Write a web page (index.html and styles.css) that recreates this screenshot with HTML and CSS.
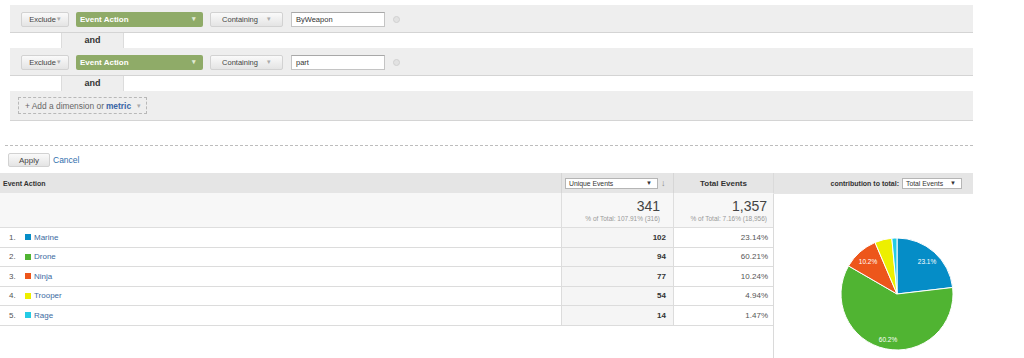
FILE: index.html
```html
<!DOCTYPE html>
<html lang="en">
<head>
    <meta charset="UTF-8">
    <title>Event Actions</title>
    <link rel="stylesheet" href="styles.css">
</head>
<body>

    <!-- Advanced filter -->
    <div class="filters">
        <div class="filter-row">
            <span class="btn btn-type">Exclude<i class="caret">▾</i></span>
            <span class="dim-select">Event Action<i class="caret">▾</i></span>
            <span class="btn btn-match">Containing<i class="caret">▾</i></span>
            <span class="text-input">ByWeapon</span>
            <span class="remove"></span>
        </div>
        <div class="and-row">
            <span class="and-box"></span>
            <span class="and-label">and</span>
            <span class="and-box wide"></span>
        </div>
        <div class="filter-row">
            <span class="btn btn-type">Exclude<i class="caret">▾</i></span>
            <span class="dim-select">Event Action<i class="caret">▾</i></span>
            <span class="btn btn-match">Containing<i class="caret">▾</i></span>
            <span class="text-input">part</span>
            <span class="remove"></span>
        </div>
        <div class="and-row">
            <span class="and-box"></span>
            <span class="and-label">and</span>
            <span class="and-box wide"></span>
        </div>
        <div class="add-row">
            <span class="add-btn">+ Add a dimension or <b>metric</b><i class="caret">▾</i></span>
        </div>
    </div>

    <div class="divider"></div>

    <div class="actions">
        <span class="btn apply">Apply</span>
        <a href="#" class="cancel">Cancel</a>
    </div>

    <!-- Report table -->
    <div class="report">
        <div class="grid">
            <div class="row head">
                <div class="cell name">Event Action</div>
                <div class="cell unique">
                    <span class="metric-select">Unique Events<i>▼</i></span>
                    <span class="sort">&#8595;</span>
                </div>
                <div class="cell total">Total Events</div>
            </div>
            <div class="row totals">
                <div class="cell name"></div>
                <div class="cell unique">
                    <span class="big">341</span>
                    <span class="pct">% of Total: 107.91% (316)</span>
                </div>
                <div class="cell total">
                    <span class="big">1,357</span>
                    <span class="pct">% of Total: 7.16% (18,956)</span>
                </div>
            </div>
            <div class="row item">
                <div class="cell name"><span class="idx">1.</span><span class="swatch blue"></span><a href="#">Marine</a></div>
                <div class="cell unique">102</div>
                <div class="cell total">23.14%</div>
            </div>
            <div class="row item">
                <div class="cell name"><span class="idx">2.</span><span class="swatch green"></span><a href="#">Drone</a></div>
                <div class="cell unique">94</div>
                <div class="cell total">60.21%</div>
            </div>
            <div class="row item">
                <div class="cell name"><span class="idx">3.</span><span class="swatch orange"></span><a href="#">Ninja</a></div>
                <div class="cell unique">77</div>
                <div class="cell total">10.24%</div>
            </div>
            <div class="row item">
                <div class="cell name"><span class="idx">4.</span><span class="swatch yellow"></span><a href="#">Trooper</a></div>
                <div class="cell unique">54</div>
                <div class="cell total">4.94%</div>
            </div>
            <div class="row item">
                <div class="cell name"><span class="idx">5.</span><span class="swatch cyan"></span><a href="#">Rage</a></div>
                <div class="cell unique">14</div>
                <div class="cell total">1.47%</div>
            </div>
        </div>

        <div class="chart">
            <div class="chart-head">
                contribution to total:
                <span class="metric-select small">Total Events<i>▼</i></span>
            </div>
            <div class="chart-body">
                <svg width="200" height="165" viewBox="0 0 200 165">
                    <g stroke="#fff" stroke-width="1">
                        <path fill="#058dc7" d="M124,100 L124,44 A56,56 0 0 1 179.62,93.47 Z"/>
                        <path fill="#50b432" d="M124,100 L179.62,93.47 A56,56 0 1 1 75.53,71.95 Z"/>
                        <path fill="#ed561b" d="M124,100 L75.53,71.95 A56,56 0 0 1 102.05,48.48 Z"/>
                        <path fill="#edef00" d="M124,100 L102.05,48.48 A56,56 0 0 1 118.84,44.24 Z"/>
                        <path fill="#24cbe5" d="M124,100 L118.84,44.24 A56,56 0 0 1 124,44 Z"/>
                    </g>
                    <g class="pie-label" fill="#fff" text-anchor="middle">
                        <text x="154" y="70">23.1%</text>
                        <text x="95" y="70">10.2%</text>
                        <text x="115" y="148">60.2%</text>
                    </g>
                </svg>
            </div>
        </div>
    </div>

</body>
</html>
```

FILE: styles.css
```css
body {
    margin: 0;
    font-family: "Liberation Sans", Arial, sans-serif;
    color: #333;
    background: #fff;
}
i {
    font-style: normal;
}

/* filter panel */
.filters {
    width: 963px;
    margin: 5px 0 0 10px;
}
.filter-row {
    display: flex;
    align-items: center;
    box-sizing: border-box;
    height: 28px;
    padding: 1px 0 0 11px;
    background: #eeeeee;
    border-bottom: 1px solid #d4d4d4;
}
.btn {
    display: inline-flex;
    align-items: center;
    justify-content: center;
    box-sizing: border-box;
    height: 15px;
    border: 1px solid #d2d2d2;
    border-radius: 2px;
    background: linear-gradient(#fafafa, #e4e4e4);
    font-size: 7.5px;
    color: #444;
}
.caret {
    color: #aaa;
    font-size: 7px;
}
.btn-type {
    width: 48px;
}
.btn-type .caret {
    margin-left: 1px;
}
.btn-match {
    width: 73px;
    margin-left: 7px;
}
.btn-match .caret {
    margin-left: 9px;
}
.dim-select {
    display: inline-flex;
    align-items: center;
    justify-content: space-between;
    box-sizing: border-box;
    width: 127px;
    height: 15px;
    margin-left: 7px;
    padding: 0 7px 0 4px;
    border-radius: 2px;
    background: #8fab68;
    color: #fff;
    font-size: 8px;
    font-weight: bold;
}
.dim-select .caret {
    color: #e3ecd6;
}
.text-input {
    display: inline-flex;
    align-items: center;
    box-sizing: border-box;
    width: 94px;
    height: 15px;
    margin-left: 8px;
    padding-left: 4px;
    border: 1px solid #c4c4c4;
    border-top-color: #a8a8a8;
    background: #fff;
    font-size: 7.5px;
    color: #333;
}
.remove {
    width: 5px;
    height: 5px;
    margin-left: 8px;
    border: 1px solid #d0d0d0;
    border-radius: 50%;
    background: #e2e2e2;
}
.and-row {
    display: flex;
    height: 15px;
    background: #eeeeee;
}
.and-box {
    width: 52px;
    background: #fff;
    border-right: 1px solid #dcdcdc;
    box-sizing: border-box;
}
.and-box.wide {
    flex: 1;
    border-left: 1px solid #dcdcdc;
    border-right: none;
}
.and-label {
    width: 61px;
    text-align: center;
    font-size: 9px;
    font-weight: bold;
    line-height: 15px;
    color: #333;
}
.add-row {
    display: flex;
    align-items: center;
    box-sizing: border-box;
    height: 30px;
    padding-left: 8px;
    background: #eeeeee;
    border-bottom: 1px solid #d4d4d4;
}
.add-btn {
    display: inline-flex;
    align-items: center;
    box-sizing: border-box;
    height: 17px;
    padding: 0 5px 0 6px;
    border: 1px dashed #b8b8b8;
    font-size: 8.4px;
    color: #666;
}
.add-btn b {
    color: #3a66a6;
    margin-left: 2px;
}
.add-btn .caret {
    margin-left: 6px;
}

.divider {
    width: 968px;
    margin: 24px 0 0 5px;
    border-top: 1px dashed #bdbdbd;
}
.actions {
    display: flex;
    align-items: center;
    height: 14px;
    margin: 7px 0 0 8px;
}
.apply {
    width: 42px;
    height: 14px;
    font-size: 8px;
}
.cancel {
    margin-left: 3px;
    font-size: 8.5px;
    color: #3170ad;
    text-decoration: none;
}

/* report */
.report {
    display: flex;
    width: 973px;
    margin-top: 6px;
}
.grid {
    width: 773px;
}
.row {
    display: grid;
    grid-template-columns: 561px 112px 100px;
    box-sizing: border-box;
}
.cell {
    box-sizing: border-box;
}
.head {
    height: 20px;
    background: #e5e5e5;
    font-size: 7px;
    font-weight: bold;
    color: #333;
}
.head .cell {
    display: flex;
    align-items: center;
}
.head .name {
    padding-left: 3px;
}
.head .unique {
    padding-left: 3px;
    border-left: 1px solid #d6d6d6;
}
.head .total {
    justify-content: center;
    border-left: 1px solid #d6d6d6;
    font-size: 8px;
}
.metric-select {
    display: inline-flex;
    align-items: center;
    justify-content: space-between;
    box-sizing: border-box;
    width: 93px;
    height: 11px;
    padding: 0 5px 0 3px;
    border: 1px solid #b5b5b5;
    background: #fff;
    font-size: 6.8px;
    font-weight: normal;
    color: #333;
}
.metric-select i {
    font-size: 6px;
}
.sort {
    margin-left: 3px;
    font-size: 9px;
    color: #888;
}
.totals {
    height: 35px;
    background: #f7f7f7;
    border-bottom: 1px solid #dedede;
}
.totals .cell {
    display: flex;
    flex-direction: column;
    align-items: flex-end;
    justify-content: center;
}
.totals .unique {
    padding-right: 13px;
    border-left: 1px solid #dedede;
}
.totals .total {
    padding-right: 6px;
    border-left: 1px solid #dedede;
}
.big {
    font-size: 14px;
    line-height: 14px;
    color: #444;
}
.pct {
    margin-top: 2px;
    font-size: 6.5px;
    color: #999;
}
.item {
    height: 19.5px;
    border-bottom: 1px solid #dcdcdc;
    font-size: 8px;
}
.item .cell {
    display: flex;
    align-items: center;
}
.item .name {
    padding-left: 9px;
}
.item .unique {
    justify-content: flex-end;
    padding-right: 7px;
    background: #f5f5f5;
    border-left: 1px solid #dcdcdc;
    color: #333;
    font-weight: bold;
}
.item .total {
    justify-content: flex-end;
    padding-right: 5px;
    border-left: 1px solid #dcdcdc;
    color: #555;
}
.idx {
    width: 16px;
    color: #555;
}
.swatch {
    width: 6px;
    height: 6px;
    margin-right: 3px;
}
.item a {
    color: #3b6a9f;
    text-decoration: none;
}
.blue { background: #058dc7; }
.green { background: #50b432; }
.orange { background: #ed561b; }
.yellow { background: #edef00; }
.cyan { background: #24cbe5; }

.chart {
    width: 200px;
    height: 185px;
    box-sizing: border-box;
    border-left: 1px solid #dadada;
}
.chart-head {
    display: flex;
    align-items: center;
    justify-content: flex-end;
    height: 20px;
    padding-right: 11px;
    background: #e5e5e5;
    font-size: 7px;
    font-weight: bold;
    color: #333;
}
.chart-head .metric-select {
    width: 60px;
    margin-left: 3px;
}
.chart-body {
    border-top: 1px solid #e6e6e6;
    margin-left: -1px;
}
.chart-body svg {
    display: block;
}
.pie-label {
    font-size: 6.5px;
    font-family: "Liberation Sans", Arial, sans-serif;
}
```
